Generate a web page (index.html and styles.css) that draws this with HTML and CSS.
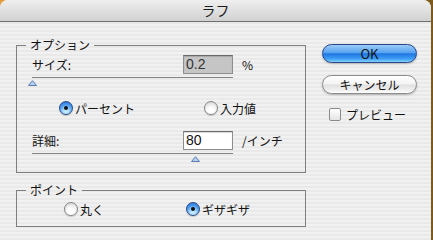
FILE: index.html
```html
<!DOCTYPE html>
<html lang="ja">
<head>
    <meta charset="UTF-8">
    <meta name="viewport" content="width=device-width, initial-scale=1.0">
    <title>ラフ</title>
    <link rel="stylesheet" href="styles.css">
</head>
<body>

    <div class="window">
        <!-- Title bar -->
        <div class="titlebar">ラフ</div>

        <div class="content">
            <!-- Left column: option groups -->
            <div class="left">
                <fieldset class="group">
                    <legend>オプション</legend>
                    <div class="group-body options">
                        <div class="field-row">
                            <span class="field-label">サイズ:</span>
                            <span class="num-box disabled">0.2</span>
                            <span class="unit">%</span>
                        </div>
                        <div class="slider">
                            <div class="track"></div>
                            <svg class="thumb thumb-size" width="9" height="6" viewBox="0 0 9 6"><polygon points="0.5,5.5 4.5,0.7 8.5,5.5" fill="#b4d0f2" stroke="#5b7db4" stroke-width="1"/></svg>
                        </div>
                        <div class="choice-row">
                            <label class="choice wide"><span class="radio on"></span>パーセント</label>
                            <label class="choice"><span class="radio"></span>入力値</label>
                        </div>
                        <div class="field-row detail">
                            <span class="field-label">詳細:</span>
                            <span class="num-box">80</span>
                            <span class="unit">/インチ</span>
                        </div>
                        <div class="slider">
                            <div class="track"></div>
                            <svg class="thumb thumb-detail" width="9" height="6" viewBox="0 0 9 6"><polygon points="0.5,5.5 4.5,0.7 8.5,5.5" fill="#b4d0f2" stroke="#5b7db4" stroke-width="1"/></svg>
                        </div>
                    </div>
                </fieldset>

                <fieldset class="group point">
                    <legend>ポイント</legend>
                    <div class="group-body points">
                        <div class="choice-row">
                            <label class="choice narrow"><span class="radio"></span>丸く</label>
                            <label class="choice"><span class="radio on"></span>ギザギザ</label>
                        </div>
                    </div>
                </fieldset>
            </div>

            <!-- Right column: buttons -->
            <div class="right">
                <div class="btn btn-ok">OK</div>
                <div class="btn btn-cancel">キャンセル</div>
                <label class="check-row"><span class="checkbox"></span>プレビュー</label>
            </div>
        </div>
    </div>

</body>
</html>
```

FILE: styles.css
```css
html, body {
    margin: 0;
    height: 100%;
}
body {
    background: linear-gradient(to right, #e39c3a, #7d5a1b);
    font-family: "Noto Sans CJK JP", "Noto Sans", sans-serif;
    font-size: 12px;
    color: #111;
}
.window {
    width: 431px;
    height: 240px;
    border-radius: 8px 8px 0 0;
    overflow: hidden;
    background: repeating-linear-gradient(#f1f1f1 0 2px, #e9e9e9 2px 4px);
}
.titlebar {
    height: 21px;
    line-height: 21px;
    text-align: center;
    font-size: 14px;
    color: #1a1a1a;
    background: linear-gradient(#efefef, #d1d1d1);
    border-bottom: 1px solid #6f6f6f;
}
.content {
    display: flex;
    padding: 16px 0 0 16px;
}
.left {
    width: 290px;
}
.group {
    margin: 0;
    padding: 0;
    border: 1px solid #7f7f7f;
    min-inline-size: 0;
}
.group legend {
    margin-left: 9px;
    padding: 0 4px;
    height: 14px;
    line-height: 14px;
    font-size: 12px;
}
.group.point {
    margin-top: 10px;
}
.group-body {
    display: flex;
    flex-direction: column;
}
.options {
    padding: 3px 0 10px 15px;
}
.points {
    padding: 5px 0 10px 0;
}
.field-row {
    display: flex;
    align-items: center;
    height: 19px;
}
.field-row.detail {
    margin-top: 16px;
}
.field-label {
    width: 151px;
}
.num-box {
    box-sizing: border-box;
    width: 50px;
    height: 19px;
    padding-left: 2px;
    font-family: "Liberation Sans", sans-serif;
    font-size: 14px;
    line-height: 16px;
    background: #fff;
    border: 1px solid #8e8e8e;
    border-top-color: #6a6a6a;
    box-shadow: inset 0 1px 1px rgba(0, 0, 0, 0.15);
}
.num-box.disabled {
    background: #c5c5c5;
    color: #333;
}
.unit {
    margin-left: 9px;
}
.slider {
    width: 201px;
}
.track {
    margin-top: 3px;
    height: 1px;
    background: #858585;
}
.thumb {
    display: block;
    margin-top: 2px;
}
.thumb-size {
    margin-left: -4px;
}
.thumb-detail {
    margin-left: 159px;
}
.choice-row {
    display: flex;
    align-items: center;
    height: 14px;
}
.options .choice-row {
    margin-top: 15px;
    padding-left: 27px;
}
.points .choice-row {
    padding-left: 47px;
}
.choice {
    display: flex;
    align-items: center;
    gap: 2px;
}
.choice.wide {
    width: 145px;
}
.choice.narrow {
    width: 122px;
}
.radio {
    box-sizing: border-box;
    width: 14px;
    height: 14px;
    border-radius: 50%;
    border: 1px solid #868686;
    background: radial-gradient(circle at 50% 75%, #ffffff 0 30%, #e8e8e8 65%, #c4c4c4 100%);
    box-shadow: 0 1px 1px rgba(0, 0, 0, 0.18);
    display: flex;
    align-items: center;
    justify-content: center;
}
.radio.on {
    border-color: #274a88;
    background: radial-gradient(circle at 50% 80%, #bde6ff 0 18%, #4d9cee 60%, #2164cc 100%);
}
.radio.on::after {
    content: "";
    width: 4px;
    height: 4px;
    border-radius: 50%;
    background: #111;
}
.right {
    display: flex;
    flex-direction: column;
    margin-left: 16px;
}
.btn {
    box-sizing: border-box;
    width: 95px;
    height: 19px;
    border-radius: 10px;
    display: flex;
    align-items: center;
    justify-content: center;
    font-size: 12px;
    box-shadow: 0 1px 2px rgba(0, 0, 0, 0.25);
}
.btn-ok {
    margin-top: 6px;
    border: 1px solid #28468a;
    font-size: 13px;
    background: linear-gradient(#9ccbf6, #56a3f0 45%, #1f76e2 52%, #3f9ff5 82%, #86d4fb);
}
.btn-cancel {
    margin-top: 12px;
    border: 1px solid #8c8c8c;
    background: linear-gradient(#ffffff, #f3f3f3 48%, #e0e0e0 52%, #f1f1f1 85%, #ffffff);
}
.check-row {
    display: flex;
    align-items: center;
    gap: 5px;
    height: 14px;
    margin: 13px 0 0 7px;
}
.checkbox {
    box-sizing: border-box;
    width: 12px;
    height: 13px;
    border: 1px solid #8a8a8a;
    border-radius: 2px;
    background: linear-gradient(#ffffff, #e4e4e4);
}
```
